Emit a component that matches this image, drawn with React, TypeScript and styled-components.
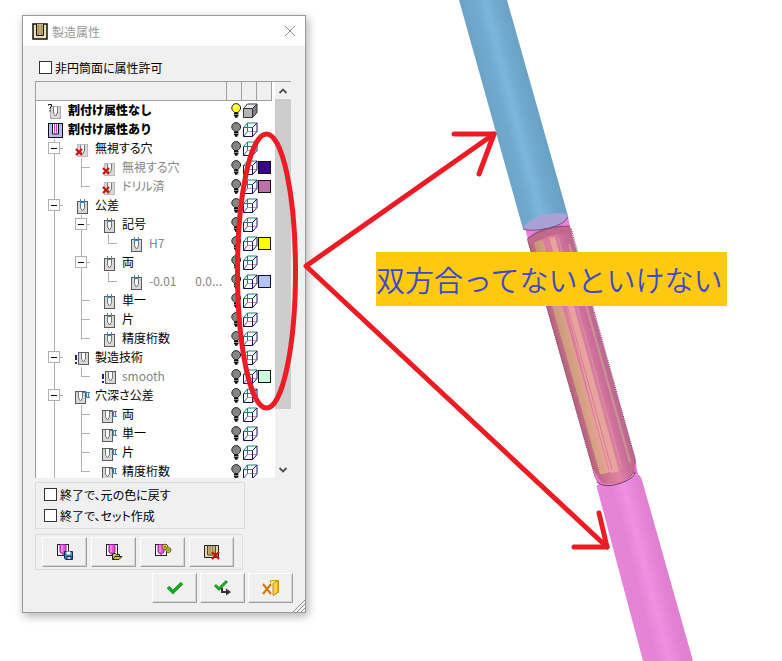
import React, { useState } from "react";
import styled, { createGlobalStyle } from "styled-components";

const GlobalStyle = createGlobalStyle`
  *, *::before, *::after { box-sizing: border-box; }
  body {
    margin: 0;
    background: #fff;
    color: #000;
    font: 12px/19px "Noto Sans CJK JP", sans-serif;
    font-feature-settings: "palt";
  }
  button, input { font: inherit; color: inherit; }
`;

const Workspace = styled.main`
  position: relative;
  min-height: 100vh;
  padding: 15px 22px;
  overflow: hidden;
`;

const Scene = styled.svg<{ $front?: boolean }>`
  position: absolute;
  inset: 0;
  width: 100%;
  height: 100%;
  pointer-events: none;
  z-index: ${(p) => (p.$front ? 2 : 0)};
`;

const Note = styled.p`
  position: absolute;
  z-index: 1;
  left: 376px;
  top: 252px;
  margin: 0;
  padding: 0 4px 0 0;
  background: #ffc90e;
  color: #3f48cc;
  font-size: 29px;
  font-weight: 350;
  line-height: 54px;
  white-space: nowrap;
  font-feature-settings: normal;
`;

const Dialog = styled.section`
  position: relative;
  z-index: 1;
  width: 284px;
  max-width: 100%;
  background: #f0f0f0;
  border: 1px solid #9a9a9a;
  box-shadow: 2px 3px 9px rgba(0, 0, 0, 0.32);
`;

const TitleBar = styled.header`
  display: flex;
  align-items: center;
  gap: 4px;
  height: 30px;
  padding: 0 7px 0 9px;
  background: #fff;
`;

const Title = styled.h1`
  flex: 1;
  margin: 0;
  color: #999;
  font-size: 12px;
  font-weight: 400;
`;

const CloseButton = styled.button`
  display: flex;
  padding: 2px;
  border: 0;
  background: none;
`;

const Body = styled.div`
  display: flex;
  flex-direction: column;
  padding: 11px 12px 9px;
`;

const CheckLabel = styled.label`
  display: flex;
  align-items: center;
  gap: 3px;
  height: 21px;
`;

const CheckBox = styled.input`
  appearance: none;
  flex: none;
  width: 13px;
  height: 13px;
  margin: 0;
  border: 1px solid #333;
  background: #fff;
  &:checked { box-shadow: inset 0 0 0 2px #fff; background: #333; }
`;

const TopOption = styled.div`
  padding: 0 4px 3px;
`;

const ListFrame = styled.div`
  display: flex;
  gap: 3px;
  height: 397px;
  margin-right: 2px;
  border: solid #a0a0a0;
  border-width: 1px 0 0 1px;
  background: #fff;
  overflow: hidden;
`;

const ListBody = styled.div`
  flex: 1;
  min-width: 0;
`;

const HeaderRow = styled.div`
  display: grid;
  grid-template-columns: 1fr 15px 15px 15px;
  height: 19px;
  background: #f0f0f0;
  border-bottom: 1px solid #a0a0a0;
  & > span { border-right: 1px solid #a0a0a0; }
`;

const Tree = styled.ul`
  margin: 0;
  padding: 0;
  list-style: none;
`;

const Row = styled.li`
  display: grid;
  grid-template-columns: 1fr 12px 15px 14px;
  height: 19px;
  padding-left: 12px;
  & > svg { display: block; }
`;

const NameCell = styled.div`
  display: flex;
  min-width: 0;
  & > svg { flex: none; margin-right: 4px; }
`;

const line = "linear-gradient(#b0b0b0, #b0b0b0) no-repeat";

const Guide = styled.span<{ $kind: string }>`
  flex: none;
  width: 27px;
  padding-top: 3px;
  background: ${(p) =>
    ({
      none: "none",
      pass: `${line} 6px 0 / 1px 100%`,
      tee: `${line} 6px 0 / 1px 100%, ${line} 6px 9px / 9px 1px`,
      end: `${line} 6px 0 / 1px 9px, ${line} 6px 9px / 9px 1px`,
    })[p.$kind]};
`;

const Expander = styled.button`
  display: block;
  width: 12px;
  height: 12px;
  padding: 0;
  border: 1px solid #b0b0b0;
  background: linear-gradient(#000, #000) no-repeat center / 6px 1px, #fff;
`;

const Caption = styled.span<{ $tone?: string }>`
  white-space: nowrap;
  line-height: 17px;
  font-weight: ${(p) => (p.$tone === "bold" ? 900 : 400)};
  font-feature-settings: ${(p) => (p.$tone === "bold" ? "normal" : "inherit")};
  color: ${(p) => (p.$tone === "grey" ? "#858585" : "#000")};
`;

const ValueText = styled(Caption)`
  margin-left: auto;
  margin-right: 9px;
`;

const Swatch = styled.span<{ $color: string }>`
  width: 13px;
  height: 13px;
  margin-top: 3px;
  border: 1px solid #111;
  background: ${(p) => p.$color};
`;

const ScrollBar = styled.div`
  display: flex;
  flex-direction: column;
  width: 16px;
  background: #f0f0f0;
`;

const ScrollButton = styled.button`
  display: grid;
  place-items: center;
  height: 17px;
  padding: 0;
  border: 0;
  background: #f0f0f0;
`;

const Thumb = styled.div`
  flex: 6;
  background: #cdcdcd;
`;

const Track = styled.div`
  flex: 1;
`;

const OptionGroup = styled.div`
  width: 210px;
  margin-top: 4px;
  padding: 1px 8px 2px;
  border: 1px solid #dcdcdc;
`;

const ToolGroup = styled.div`
  display: flex;
  gap: 4px;
  width: 208px;
  margin-top: 5px;
  padding: 2px 6px;
  border: 1px solid #dcdcdc;
`;

const ActionRow = styled.div`
  display: flex;
  justify-content: flex-end;
  gap: 3px;
  padding-top: 3px;
`;

const PushButton = styled.button`
  display: grid;
  place-items: center;
  width: 45px;
  height: 30px;
  padding: 0;
  border: 1px solid;
  border-color: #fff #a0a0a0 #a0a0a0 #fff;
  box-shadow: inset -1px -1px #d4d4d4;
  background: #f0f0f0;
`;

const Grip = styled.svg`
  position: absolute;
  right: 0;
  bottom: 0;
`;

type IconKind = "none" | "set" | "ignore" | "tol" | "tech" | "depth";

const Cross = ({ x, y, s = 6 }: { x: number; y: number; s?: number }) => (
  <path d={`M${x} ${y}l${s} ${s}m0 ${-s}l${-s} ${s}`} stroke="#c4160e" strokeWidth="2.2" fill="none" />
);

/* A block with a drilled, pointed hole. */
const Block = ({ x, y, stroke = "#5c5c5c" }: { x: number; y: number; stroke?: string }) => (
  <g>
    <rect x={x + 0.5} y={y + 0.5} width="10" height="12" fill="#d8d8d8" stroke={stroke} />
    <path d={`M${x + 3.5} ${y + 1}v6l2 3l2 -3v-6`} fill="#fff" stroke="#777" />
  </g>
);

const NodeIcon = ({ kind }: { kind: IconKind }) => (
  <svg width="16" height="19" viewBox="0 0 16 19" aria-hidden="true">
    {kind === "none" && (
      <>
        <Block x={2} y={5} stroke="#aaa" />
        <path d="M.5 4.500v-1h3v2l-1.500 1.500v1M2 9v1.500" stroke="#111" fill="none" />
      </>
    )}
    {kind === "set" && (
      <>
        <rect x=".5" y="3.500" width="14" height="14" fill="#b8b8f4" stroke="#111" />
        <path d="M4.500 4v10h6V4" fill="#fff" stroke="#111" />
        <path d="M6.500 4v9M8.500 4v9" stroke="#dc3cdc" />
      </>
    )}
    {kind === "ignore" && (
      <>
        <Block x={2} y={5} stroke="#bbb" />
        <Cross x={1} y={10} />
      </>
    )}
    {kind === "tol" && (
      <>
        <Block x={2} y={5} />
        <path d="M5.500 3v6M9.500 3v6M5 6.500h5" stroke="#4286b8" fill="none" />
      </>
    )}
    {kind === "tech" && (
      <>
        <Block x={3} y={4} />
        <path d="M1 7v5M1 14v2" stroke="#2814a8" strokeWidth="2" />
      </>
    )}
    {kind === "depth" && (
      <>
        <Block x={0} y={5} />
        <path d="M8 6.500h7M10 11.500h5M11.500 7v5M13.500 7v5" stroke="#3c86b0" fill="none" />
      </>
    )}
  </svg>
);

const Bulb = ({ lit }: { lit?: boolean }) => (
  <svg width="11" height="19" viewBox="0 0 11 19" aria-hidden="true">
    <path d="M3.500 11.500C2 9.800 .8 8.800 .8 7a4.400 4.400 0 0 1 8.800 0c0 1.800-1.200 2.800-2.700 4.500z" fill={lit ? "#ffff20" : "#858585"} stroke="#222" />
    <path d="M3 12.500h4.500M3 14.500h4.500M4 16h2.500" stroke="#111" strokeWidth="1.400" />
    {lit && <path d="M3 6.500q.5-2 2-2" stroke="#fff" fill="none" />}
  </svg>
);

const Cube = ({ solid }: { solid?: boolean }) => (
  <svg width="15" height="19" viewBox="0 0 15 19" aria-hidden="true">
    {solid ? (
      <g stroke="#333" strokeLinejoin="round">
        <path d="M.5 7.500h9v9h-9z" fill="#b4b4b4" />
        <path d="M.5 7.500l4-4.500h9.500l-4.500 4.500z" fill="#ececec" />
        <path d="M9.500 7.500L14 3v8.500l-4.500 5z" fill="#808080" />
      </g>
    ) : (
      <g fill="none" strokeLinejoin="round">
        <path d="M4.500 11.500H14" stroke="#c08cb4" />
        <path d="M.5 16.500l4-5" stroke="#4060a0" />
        <path d="M.5 7.500h9M.5 7.500l4-4.500H14M4.500 3v8.500" stroke="#16807c" />
        <path d="M.5 7.500v9h9v-9L14 3v8.500l-4.500 5" stroke="#14145c" />
      </g>
    )}
  </svg>
);

interface Node {
  text: string;
  icon: IconKind;
  guides?: string;
  open?: boolean;
  tone?: "bold" | "grey";
  value?: string;
  color?: string;
}

const guideKinds: Record<string, string> = { "|": "pass", "+": "tee", L: "end", " ": "none" };

const nodes: Node[] = [
  { text: "割付け属性なし", icon: "none", tone: "bold" },
  { text: "割付け属性あり", icon: "set", tone: "bold" },
  { text: "無視する穴", icon: "ignore", guides: "+", open: true },
  { text: "無視する穴", icon: "ignore", guides: "|+", tone: "grey", color: "#3a0088" },
  { text: "ドリル済", icon: "ignore", guides: "|L", tone: "grey", color: "#c070a8" },
  { text: "公差", icon: "tol", guides: "+", open: true },
  { text: "記号", icon: "tol", guides: "|+", open: true },
  { text: "H7", icon: "tol", guides: "||L", tone: "grey", color: "#ffff00" },
  { text: "両", icon: "tol", guides: "|+", open: true },
  { text: "-0.01", icon: "tol", guides: "||L", tone: "grey", value: "0.0...", color: "#b0c4ff" },
  { text: "単一", icon: "tol", guides: "|+" },
  { text: "片", icon: "tol", guides: "|+" },
  { text: "精度桁数", icon: "tol", guides: "|L" },
  { text: "製造技術", icon: "tech", guides: "+", open: true },
  { text: "smooth", icon: "tech", guides: "|L", tone: "grey", color: "#ccffdc" },
  { text: "穴深さ公差", icon: "depth", guides: "+", open: true },
  { text: "両", icon: "depth", guides: "|+" },
  { text: "単一", icon: "depth", guides: "|+" },
  { text: "片", icon: "depth", guides: "|+" },
  { text: "精度桁数", icon: "depth", guides: "|L" },
];

const TreeRow = ({ node, first }: { node: Node; first: boolean }) => {
  const guides = [...(node.guides ?? "")];
  return (
    <Row>
      <NameCell>
        {guides.map((g, i) => (
          <Guide key={i} $kind={guideKinds[g]}>
            {node.open && i === guides.length - 1 && <Expander aria-label={`${node.text} −`} />}
          </Guide>
        ))}
        <NodeIcon kind={node.icon} />
        <Caption $tone={node.tone}>{node.text}</Caption>
        {node.value && <ValueText $tone={node.tone}>{node.value}</ValueText>}
      </NameCell>
      <Bulb lit={first} />
      <Cube solid={first} />
      {node.color && <Swatch $color={node.color} />}
    </Row>
  );
};

const Check = ({ text }: { text: string }) => {
  const [on, setOn] = useState(false);
  return (
    <CheckLabel>
      <CheckBox type="checkbox" checked={on} onChange={() => setOn(!on)} />
      {text}
    </CheckLabel>
  );
};

const PinkHole = () => (
  <>
    <rect x="1.500" y="1.500" width="11" height="11" fill="#fff" stroke="#222" />
    <path d="M4 1.500h6V9L7 11.500L4 9z" fill="#ec4fe0" stroke="#8c2090" />
    <path d="M6 2v7" stroke="#ffb0fa" />
  </>
);

const ToolIcon = ({ kind }: { kind: string }) => (
  <svg width="18" height="18" viewBox="0 0 18 18" aria-hidden="true">
    {kind !== "clear" && <PinkHole />}
    {kind === "save" && (
      <g>
        <path d="M8.500 8.500h8v8h-7l-1-1z" fill="#3c84b8" stroke="#102c50" />
        <path d="M10.500 8.500h4v3h-4z" fill="#fff" />
        <path d="M11 13.500h4v3h-4z" fill="#cde" stroke="#102c50" />
      </g>
    )}
    {kind === "open" && (
      <path d="M7.500 16.500v-6h3l1 1h3v2h2.500l-3 3z M7.500 16.500l2.500-3h5" fill="#c8c04c" stroke="#28280c" />
    )}
    {kind === "gear" && (
      <g fill="#f0e04c" stroke="#6c6010">
        <circle cx="11" cy="4" r="2.800" />
        <circle cx="14.500" cy="7" r="2.500" />
        <circle cx="11" cy="4" r="1" fill="#fff" />
        <circle cx="14.500" cy="7" r=".8" fill="#fff" />
      </g>
    )}
    {kind === "clear" && (
      <g>
        <path d="M1.500 2.500h14v12h-14z" fill="#e0dcb0" stroke="#222" />
        <path d="M4.500 3v9h8V3" fill="#c4b078" stroke="#54481c" />
        <path d="M7 3v8M9.500 3v8" fill="none" stroke="#a08c50" />
        <Cross x={9} y={9} s={7} />
      </g>
    )}
  </svg>
);

const ActionIcon = ({ kind }: { kind: string }) => (
  <svg width="20" height="18" viewBox="0 0 20 18" aria-hidden="true">
    {kind === "ok" && <path d="M3 8l5 5l9-9" fill="none" stroke="#18a424" strokeWidth="3.600" />}
    {kind === "apply" && (
      <>
        <path d="M2 6l4 4l8-8" fill="none" stroke="#18a424" strokeWidth="3" />
        <path d="M9 9v4h5" fill="none" stroke="#333" strokeWidth="2" />
        <path d="M13 9.500l5 3.500l-5 3.500z" fill="#333" />
      </>
    )}
    {kind === "exit" && (
      <>
        <path d="M9.500 4V1.500h8v12h-3" fill="#fff0a8" stroke="#d49818" />
        <path d="M12 4.500l5-3v12l-5 3z" fill="#ffd43c" stroke="#c48810" />
        <path d="M2 5l8 10M10 5L2 15" fill="none" stroke="#d07c10" strokeWidth="2.200" />
      </>
    )}
  </svg>
);

const Pipe = () => (
  <Scene aria-hidden="true">
    <defs>
      <linearGradient id="blue" gradientUnits="userSpaceOnUse" x1="459" y1="0" x2="505" y2="-12">
        <stop offset="0" stopColor="#6ca4c6" />
        <stop offset=".3" stopColor="#70a9ce" />
        <stop offset=".52" stopColor="#7db6dc" />
        <stop offset=".75" stopColor="#70a9ce" />
        <stop offset="1" stopColor="#6aa2c4" />
      </linearGradient>
      <linearGradient id="pink" gradientUnits="userSpaceOnUse" x1="597" y1="487" x2="643" y2="475">
        <stop offset="0" stopColor="#e684d8" />
        <stop offset=".3" stopColor="#e482d6" />
        <stop offset=".55" stopColor="#f190e2" />
        <stop offset=".8" stopColor="#e482d6" />
        <stop offset="1" stopColor="#de7fd0" />
      </linearGradient>
      <linearGradient id="core" gradientUnits="userSpaceOnUse" x1="528" y1="238" x2="570" y2="226">
        <stop offset="0" stopColor="#b8647e" />
        <stop offset=".15" stopColor="#c8708c" />
        <stop offset=".5" stopColor="#e084a4" />
        <stop offset=".75" stopColor="#cc6e9a" />
        <stop offset="1" stopColor="#b86890" />
      </linearGradient>
      <linearGradient id="tan" gradientUnits="userSpaceOnUse" x1="534" y1="243" x2="555" y2="238">
        <stop offset="0" stopColor="#c8947c" />
        <stop offset=".4" stopColor="#d0a080" />
        <stop offset="1" stopColor="#eca49c" />
      </linearGradient>
    </defs>
    <path d="M525 228L568 217L572 236L530 247z" fill="#f07ce0" />
    <path d="M527 239Q545 222 570 227L635 458Q641 476 619 483Q600 488 595 477z" fill="url(#core)" />
    <path d="M527 239Q545 222 570 227L572 233Q552 232 530 245z" fill="#c4688a" />
    <path d="M534 243Q538 240 543 240L610 471Q605 475 600 474z" fill="url(#tan)" />
    <path d="M549 239L555 237L619 471Q613 474 609 472z" fill="#e8a49c" />
    <path d="M545 240L609 470" stroke="#e07c9c" />
    <path d="M549 239L612 470" stroke="#d8789c" />
    <path d="M558 237L622 469" stroke="#d996a0" />
    <path d="M569 244L630 462" stroke="#cc9490" strokeWidth="2" />
    <path d="M528 241L595 477Q600 489 619 483Q637 478 635 458L571 228" fill="none" stroke="#804060" strokeDasharray="1 1" />
    <path d="M597 488Q596 484 601 483Q617 488 635 474Q640 473 642 480L693 661H643z" fill="url(#pink)" />
    <path d="M593 469l4 14h5zM635 461l3 13h-4z" fill="#e476d4" />
    <path d="M597 482Q605 489 621 483Q635 478 635 472" fill="none" stroke="#783868" />
    <path d="M459 0H507L568 216Q567 224 548 228Q532 232 523 229z" fill="url(#blue)" />
    <path d="M523 229Q526 219 548 214Q566 211 568 216Q566 224 549 228Q532 232 523 229z" fill="#a9a0d6" />
    <path d="M523 229Q532 232 549 228Q565 224 568 217M528 238Q545 226 570 226" fill="none" stroke="#785080" />
  </Scene>
);

const Markup = () => (
  <Scene $front aria-hidden="true">
    <g fill="none" stroke="#ed1c24" strokeWidth="5" strokeLinecap="round" strokeLinejoin="round">
      <ellipse cx="266.500" cy="271" rx="29" ry="137" />
      <path d="M494 134L306 266L607 547" />
      <path d="M454 134H494L479 174" />
      <path d="M574 547H607L599 513" />
    </g>
  </Scene>
);

export default function App() {
  return (
    <Workspace>
      <GlobalStyle />
      <Pipe />
      <Note>双方合ってないといけない</Note>
      <Dialog aria-labelledby="dialog-title">
        <TitleBar>
          <svg width="16" height="17" viewBox="0 0 16 17" aria-hidden="true">
            <path d="M1 1h14v15H1z" fill="#e8e4b4" stroke="#111" strokeWidth="1.500" />
            <path d="M4.500 1v11.500h7V1" fill="#c8ac74" stroke="#111" />
            <path d="M6.500 2v10M9.500 2v10" stroke="#a88c54" />
          </svg>
          <Title id="dialog-title">製造属性</Title>
          <CloseButton aria-label="閉じる">
            <svg width="12" height="12" viewBox="0 0 12 12">
              <path d="M1 1l10 10M11 1L1 11" stroke="#8c8c8c" />
            </svg>
          </CloseButton>
        </TitleBar>
        <Body>
          <TopOption>
            <Check text="非円筒面に属性許可" />
          </TopOption>
          <ListFrame>
            <ListBody>
              <HeaderRow>
                <span />
                <span />
                <span />
                <span />
              </HeaderRow>
              <Tree>
                {nodes.map((node, i) => (
                  <TreeRow key={i} node={node} first={i === 0} />
                ))}
              </Tree>
            </ListBody>
            <ScrollBar>
              <ScrollButton aria-label="上へ">
                <svg width="10" height="8" viewBox="0 0 10 8">
                  <path d="M1.500 6L5 2.500L8.500 6" fill="none" stroke="#505050" strokeWidth="1.800" />
                </svg>
              </ScrollButton>
              <Thumb />
              <Track />
              <ScrollButton aria-label="下へ">
                <svg width="10" height="8" viewBox="0 0 10 8">
                  <path d="M1.500 2L5 5.500L8.500 2" fill="none" stroke="#505050" strokeWidth="1.800" />
                </svg>
              </ScrollButton>
            </ScrollBar>
          </ListFrame>
          <OptionGroup>
            <Check text="終了で、元の色に戻す" />
            <Check text="終了で、セット作成" />
          </OptionGroup>
          <ToolGroup>
            <PushButton aria-label="保存"><ToolIcon kind="save" /></PushButton>
            <PushButton aria-label="開く"><ToolIcon kind="open" /></PushButton>
            <PushButton aria-label="設定"><ToolIcon kind="gear" /></PushButton>
            <PushButton aria-label="削除"><ToolIcon kind="clear" /></PushButton>
          </ToolGroup>
          <ActionRow>
            <PushButton aria-label="OK"><ActionIcon kind="ok" /></PushButton>
            <PushButton aria-label="適用"><ActionIcon kind="apply" /></PushButton>
            <PushButton aria-label="終了"><ActionIcon kind="exit" /></PushButton>
          </ActionRow>
        </Body>
        <Grip width="12" height="12" viewBox="0 0 12 12" aria-hidden="true">
          <path d="M0 12L12 0M4 12L12 4M8 12L12 8" stroke="#909090" />
        </Grip>
      </Dialog>
      <Markup />
    </Workspace>
  );
}
